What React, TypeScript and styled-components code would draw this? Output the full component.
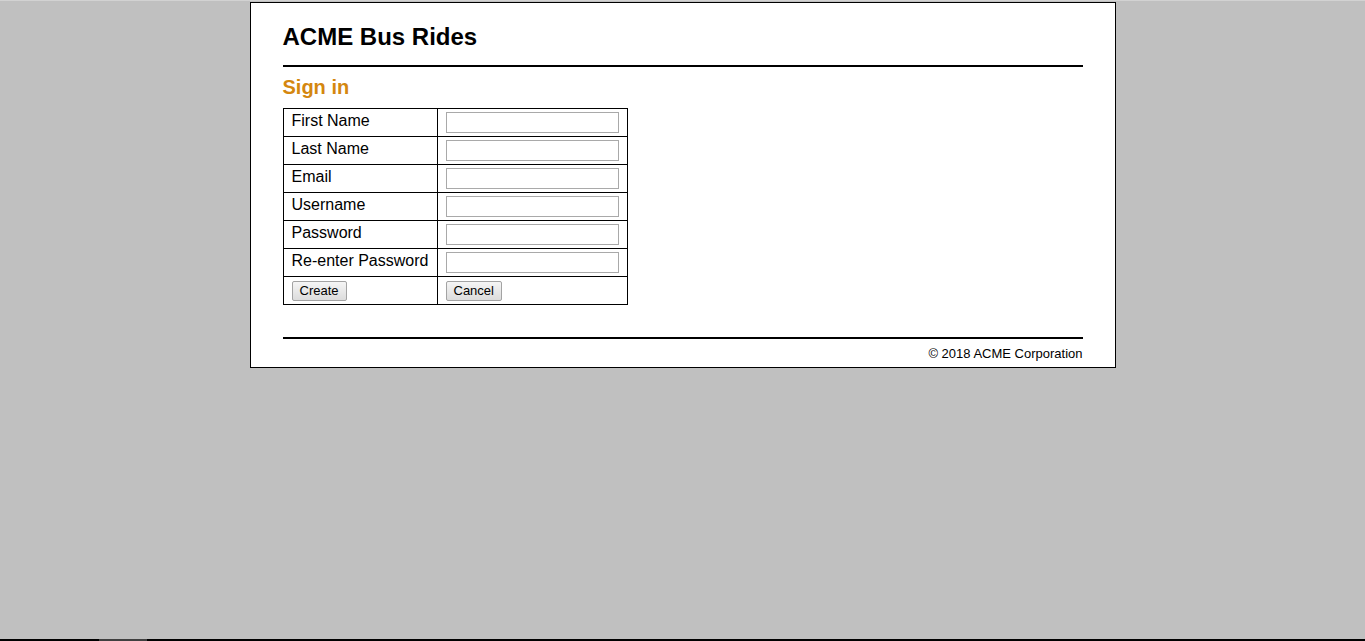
import React from 'react';
import styled, { createGlobalStyle } from 'styled-components';

const GlobalStyle = createGlobalStyle`
  html, body {
    margin: 0;
    padding: 0;
    background-color: #c0c0c0;
  }
  body {
    border-top: 1px solid #d2d2d2;
    min-height: 100vh;
    box-sizing: border-box;
    font-family: 'Liberation Sans', Arial, sans-serif;
  }
`;

const Page = styled.div`
  width: 800px;
  margin: 1px auto 0;
  padding: 20px 32px 6px;
  background-color: #ffffff;
  border: 1px solid #000000;
`;

const Header = styled.header`
  border-bottom: 2px solid #000000;
  padding-bottom: 14px;
`;

const Title = styled.h1`
  margin: 0;
  font-size: 24px;
  font-weight: bold;
  color: #000000;
`;

const SectionTitle = styled.h2`
  margin: 9px 0 9px;
  font-size: 20px;
  font-weight: bold;
  color: #d4870f;
`;

const Table = styled.table`
  border-collapse: collapse;
  table-layout: fixed;
  width: 345px;
`;

const Cell = styled.td<{ $label?: boolean }>`
  border: 1px solid #000000;
  height: 28px;
  padding: ${(p) => (p.$label ? '0 8px 3px' : '0 8px')};
  box-sizing: border-box;
  font-size: 16px;
  color: #000000;
  white-space: nowrap;
  vertical-align: middle;
`;

const TextInput = styled.input`
  display: block;
  width: 173px;
  height: 21px;
  margin: 0;
  padding: 1px 2px;
  box-sizing: border-box;
  border: 1px solid #a9a9a9;
  background: #ffffff;
  font-size: 13px;
  font-family: 'Liberation Sans', Arial, sans-serif;
`;

const Button = styled.button`
  display: block;
  height: 20px;
  margin: 0;
  padding: 0 7px;
  border: 1px solid #a3a3a3;
  border-radius: 2px;
  background: linear-gradient(#f5f5f5, #dcdcdc);
  font-size: 13px;
  font-family: 'Liberation Sans', Arial, sans-serif;
  color: #000000;
`;

const Footer = styled.footer`
  margin-top: 32px;
  border-top: 2px solid #000000;
  padding-top: 7px;
  text-align: right;
  font-size: 13px;
  color: #000000;
`;

const BottomBar = styled.div`
  position: fixed;
  left: 0;
  right: 0;
  bottom: 0;
  height: 2px;
  background: #000000;
`;

const BarThumb = styled.div`
  margin-left: 99px;
  width: 48px;
  height: 100%;
  background: #404040;
`;

const fields = ['First Name', 'Last Name', 'Email', 'Username', 'Password', 'Re-enter Password'];

const App: React.FC = () => {
  return (
    <>
      <GlobalStyle />
      <Page>
        <Header>
          <Title>ACME Bus Rides</Title>
        </Header>
        <SectionTitle>Sign in</SectionTitle>
        <Table>
          <colgroup>
            <col style={{ width: 154 }} />
            <col />
          </colgroup>
          <tbody>
            {fields.map((f) => (
              <tr key={f}>
                <Cell $label>{f}</Cell>
                <Cell>
                  <TextInput type={f.includes('Password') ? 'password' : 'text'} />
                </Cell>
              </tr>
            ))}
            <tr>
              <Cell>
                <Button type="button">Create</Button>
              </Cell>
              <Cell>
                <Button type="button">Cancel</Button>
              </Cell>
            </tr>
          </tbody>
        </Table>
        <Footer>© 2018 ACME Corporation</Footer>
      </Page>
      <BottomBar>
        <BarThumb />
      </BottomBar>
    </>
  );
};

export default App;
